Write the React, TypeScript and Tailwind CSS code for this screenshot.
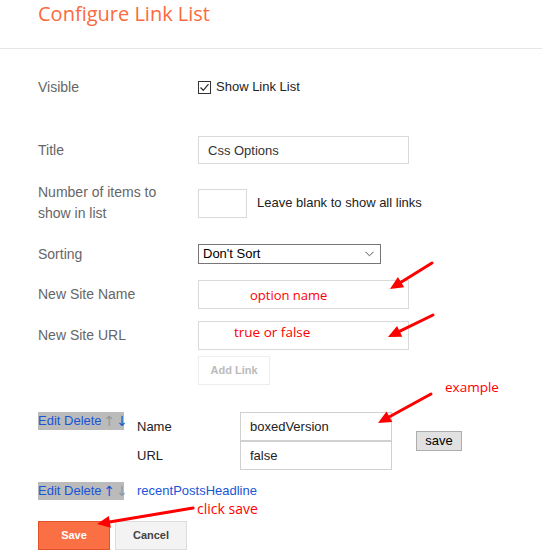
import React from "react";

type Arrow = { x1: number; y1: number; x2: number; y2: number };

// red annotation arrows drawn over the form
const arrows: Arrow[] = [
  { x1: 432, y1: 263, x2: 390, y2: 289 },
  { x1: 433, y1: 315, x2: 388, y2: 337 },
  { x1: 431, y1: 394, x2: 378, y2: 423 },
  { x1: 193, y1: 508, x2: 97, y2: 524 },
];

const ArrowShape = ({ x1, y1, x2, y2 }: Arrow) => {
  const dx = x2 - x1;
  const dy = y2 - y1;
  const len = Math.hypot(dx, dy);
  const ux = dx / len;
  const uy = dy / len;
  const head = 13;
  const half = 6;
  const bx = x2 - ux * head;
  const by = y2 - uy * head;
  const px = -uy;
  const py = ux;
  const pts = `${x2},${y2} ${bx + px * half},${by + py * half} ${bx - px * half},${by - py * half}`;
  return (
    <g>
      <line x1={x1} y1={y1} x2={bx + ux * 2} y2={by + uy * 2} stroke="#ff0000" strokeWidth={3} strokeLinecap="round" />
      <polygon points={pts} fill="#ff0000" />
    </g>
  );
};

const Label = ({ children }: { children: React.ReactNode }) => (
  <div className="w-[160px] shrink-0 text-[14px] leading-[21px] text-[#666]">{children}</div>
);

const EditLinks = ({ upOn, downOn }: { upOn: boolean; downOn: boolean }) => (
  <div className="flex h-[18px] w-[86px] shrink-0 items-center bg-[#bbbbbb] text-[13px] leading-[18px] text-[#1a55d6] whitespace-nowrap">
    <span>Edit Delete</span>
    <span
      className={
        "ml-[2px] font-['DejaVu_Sans',sans-serif] text-[14px] " + (upOn ? "text-[#1a55d6]" : "text-[#8e9a9a]")
      }
    >
      ↑
    </span>
    <span
      className={
        "ml-[1px] font-['DejaVu_Sans',sans-serif] text-[14px] " + (downOn ? "text-[#1a55d6]" : "text-[#8e9a9a]")
      }
    >
      ↓
    </span>
  </div>
);

export default function App() {
  return (
    <div className="relative w-[542px] h-[552px] overflow-hidden bg-white font-['Liberation_Sans',Arial,sans-serif]">
      {/* header */}
      <div className="h-[49px] border-b border-[#e5e5e5] pl-[38px]">
        <h1 className="font-['Open_Sans',sans-serif] text-[20px] leading-[28px] text-[#fb6a3e]">Configure Link List</h1>
      </div>

      <div className="px-[38px]">
        {/* visible */}
        <div className="mt-[24px] flex h-[28px] items-center">
          <Label>Visible</Label>
          <span className="flex h-[13px] w-[13px] items-center justify-center border border-[#333]">
            <svg width="11" height="11" viewBox="0 0 11 11">
              <path d="M1.5 5.5 L4.3 8.3 L9.5 2.2" fill="none" stroke="#333" strokeWidth="1.3" />
            </svg>
          </span>
          <span className="ml-[5px] text-[13px] text-[#222]">Show Link List</span>
        </div>

        {/* title */}
        <div className="mt-[35px] flex h-[28px] items-center">
          <Label>Title</Label>
          <input
            readOnly
            value="Css Options"
            className="h-[28px] w-[211px] border border-[#d9d9d9] px-[9px] text-[13px] text-[#333] outline-none"
          />
        </div>

        {/* number of items */}
        <div className="mt-[18px] flex h-[42px] items-center">
          <Label>
            Number of items to
            <br />
            show in list
          </Label>
          <input readOnly className="h-[29px] w-[49px] border border-[#d9d9d9] outline-none" />
          <span className="ml-[10px] text-[13px] text-[#222]">Leave blank to show all links</span>
        </div>

        {/* sorting */}
        <div className="mt-[20px] flex h-[20px] items-center">
          <Label>Sorting</Label>
          <div className="flex h-[20px] w-[183px] items-center justify-between border border-[#767676] pl-[4px] pr-[6px] text-[13px] text-black">
            <span>Don't Sort</span>
            <svg width="9" height="6" viewBox="0 0 9 6">
              <path d="M0.5 0.8 L4.5 4.8 L8.5 0.8" fill="none" stroke="#555" strokeWidth="1" />
            </svg>
          </div>
        </div>

        {/* new site name */}
        <div className="mt-[16px] flex h-[29px] items-center">
          <Label>New Site Name</Label>
          <input readOnly className="h-[29px] w-[211px] border border-[#d9d9d9] outline-none" />
        </div>

        {/* new site url */}
        <div className="mt-[12px] flex h-[29px] items-center">
          <Label>New Site URL</Label>
          <input readOnly className="h-[29px] w-[211px] border border-[#d9d9d9] outline-none" />
        </div>

        <div className="mt-[6px] pl-[160px]">
          <button className="h-[29px] w-[72px] border border-[#eeeeee] bg-white text-[11px] font-bold text-[#bbbbbb]">
            Add Link
          </button>
        </div>

        {/* link being edited */}
        <div className="mt-[27px] flex">
          <EditLinks upOn={false} downOn={true} />
          <div className="ml-[13px] grid grid-cols-[103px_152px] text-[13px] text-[#222]">
            <div className="flex h-[29px] items-center">Name</div>
            <input
              readOnly
              value="boxedVersion"
              className="h-[29px] w-[152px] border border-[#d0d0d0] px-[9px] text-[13px] text-[#222] outline-none"
            />
            <div className="flex h-[29px] items-center">URL</div>
            <input
              readOnly
              value="false"
              className="h-[29px] w-[152px] border border-[#d0d0d0] px-[9px] text-[13px] text-[#222] outline-none"
            />
          </div>
          <button className="ml-[24px] self-center h-[20px] w-[46px] border border-[#adadad] bg-[#e1e1e1] text-[13px] leading-[18px] text-black">
            save
          </button>
        </div>

        {/* saved link */}
        <div className="mt-[12px] flex h-[18px] items-center">
          <EditLinks upOn={true} downOn={false} />
          <span className="ml-[13px] text-[13px] text-[#1a55d6]">recentPostsHeadline</span>
        </div>

        {/* bottom buttons */}
        <div className="mt-[21px] flex gap-[5px]">
          <button className="h-[29px] w-[72px] border border-[#e0522b] bg-[#fa7044] text-[11px] font-bold text-white">
            Save
          </button>
          <button className="h-[29px] w-[72px] border border-[#dcdcdc] bg-[#f3f3f3] text-[11px] font-bold text-[#444]">
            Cancel
          </button>
        </div>
      </div>

      {/* annotations */}
      <span className="absolute left-[250px] top-[286px] font-['Open_Sans',sans-serif] text-[13px] leading-[18px] text-[#ff0000]">
        option name
      </span>
      <span className="absolute left-[234px] top-[323px] font-['Open_Sans',sans-serif] text-[13.5px] leading-[18px] text-[#ff0000]">
        true or false
      </span>
      <span className="absolute left-[445px] top-[378px] font-['Open_Sans',sans-serif] text-[13.5px] leading-[18px] text-[#ff0000]">
        example
      </span>
      <span className="absolute left-[197px] top-[500px] font-['Open_Sans',sans-serif] text-[14px] leading-[18px] text-[#ff0000]">
        click save
      </span>
      <svg className="pointer-events-none absolute inset-0" width="542" height="552">
        {arrows.map((a, i) => (
          <ArrowShape key={i} {...a} />
        ))}
      </svg>
    </div>
  );
}
